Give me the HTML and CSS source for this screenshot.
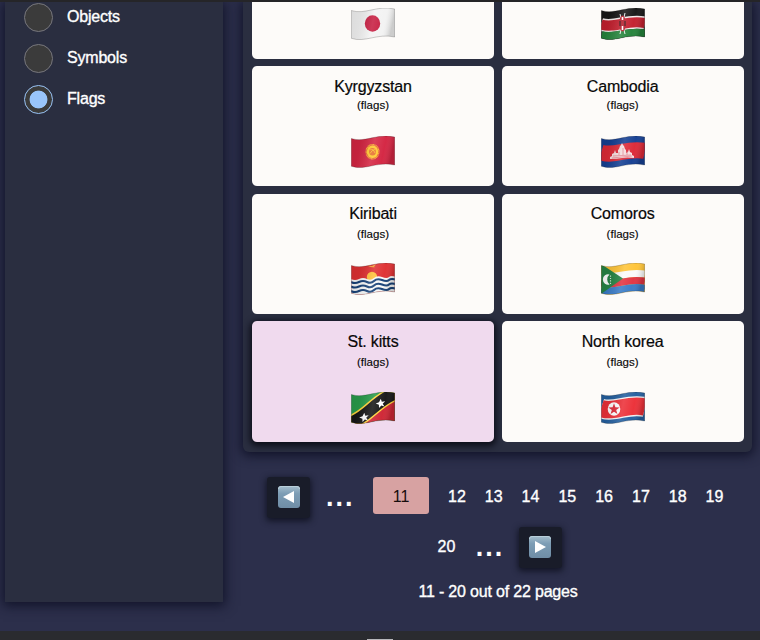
FILE: index.html
```
<!DOCTYPE html>
<html lang="en">
<head>
<meta charset="utf-8">
<title>Emoji search</title>
<link rel="stylesheet" href="styles.css">
</head>
<body>
<svg class="defs" aria-hidden="true">
  <defs>
    <clipPath id="cloth"><path d="M.3 2.5C14 7 26-3 43.7 1V29C26 25 14 35 .3 30.3Z"/></clipPath>
    <path id="wave" d="M0 2.5C14 7 26-3 44 1"/>
    <linearGradient id="fold" x1="0" x2="1" y1="0" y2=".15">
      <stop offset="0" stop-color="#000" stop-opacity=".1"/>
      <stop offset=".22" stop-color="#000" stop-opacity=".08"/>
      <stop offset=".55" stop-color="#fff" stop-opacity=".12"/>
      <stop offset=".8" stop-color="#fff" stop-opacity=".02"/>
      <stop offset="1" stop-color="#000" stop-opacity=".16"/>
    </linearGradient>
    <linearGradient id="key" x1="0" x2="0" y1="0" y2="1">
      <stop offset="0" stop-color="#a4bdcc"/><stop offset=".35" stop-color="#7d9db5"/><stop offset="1" stop-color="#6f8da6"/>
    </linearGradient>
    <g id="shade">
      <path d="M.3 2.5C14 7 26-3 43.7 1V29C26 25 14 35 .3 30.3Z" fill="url(#fold)" stroke="#000" stroke-opacity=".22" stroke-width=".9"/>
    </g>
  </defs>
</svg>
<div class="page">
  <aside class="sidebar">
    <label class="option"><span class="radio"></span><span class="name">Objects</span></label>
    <label class="option"><span class="radio"></span><span class="name">Symbols</span></label>
    <label class="option"><span class="radio checked"></span><span class="name">Flags</span></label>
  </aside>
  <main class="content">
    <section class="panel">
      <article class="card first">
        <svg class="flag" viewBox="0 0 44 33"><g clip-path="url(#cloth)"><path fill="#f3f3f3" d="M0 0h44v33H0z"/><ellipse cx="21.5" cy="15.5" rx="7.7" ry="8.2" fill="#c71f42"/></g><use href="#shade"/></svg>
      </article>
      <article class="card first">
        <svg class="flag" viewBox="0 0 44 33"><g clip-path="url(#cloth)"><path fill="#171717" d="M0 0h44v33H0z"/><g fill="none"><use href="#wave" y="14" stroke="#f5eeee" stroke-width="13"/><use href="#wave" y="14" stroke="#c3202f" stroke-width="10"/><use href="#wave" y="25.500" stroke="#25843c" stroke-width="10"/></g><path d="M19 6l5 20M24 5l-5 21" stroke="#eee" stroke-width="1"/><ellipse cx="21.5" cy="15.5" rx="3.3" ry="8" fill="#b51f2d"/><path d="M21.5 9v3m0 6v4" stroke="#fff" stroke-width="1.6"/><path d="M19 13v5m5-5v5" stroke="#241818"/></g><use href="#shade"/></svg>
      </article>
      <article class="card">
        <h2>Kyrgyzstan</h2><p>(flags)</p>
        <svg class="flag" viewBox="0 0 44 33"><g clip-path="url(#cloth)"><path fill="#d42542" d="M0 0h44v33H0z"/><ellipse cx="21.5" cy="15.7" rx="6.4" ry="7.2" fill="none" stroke="#f9b72d" stroke-width="1.2" stroke-dasharray="1 .4"/><ellipse cx="21.5" cy="15.7" rx="5.8" ry="6.4" fill="#ffc92e"/><ellipse cx="21.5" cy="15.7" rx="3.4" ry="3.8" fill="#e7702d"/><path d="M19 14q3-2 5 3m-5 .5q2-4 5-4" fill="none" stroke="#ffc933" stroke-width=".8"/></g><use href="#shade"/></svg>
      </article>
      <article class="card">
        <h2>Cambodia</h2><p>(flags)</p>
        <svg class="flag" viewBox="0 0 44 33"><g clip-path="url(#cloth)"><path fill="#153f93" d="M0 0h44v33H0z"/><use href="#wave" y="14" fill="none" stroke="#dd2937" stroke-width="16"/><path d="M9 23v-2l2-1v-2l2-1 1-3 1 3h2v-3l1-1 1-3 1-1 1-2 1 2 1 1 1 3 1 1v3l2-1 1-3 1 3 2 1v2l2 1v2q-7-1-12 0t-12 1z" fill="#f5dedf"/><path d="M12 20l18-1M11 22l20-2M18 16v3m4-7v7m4-4v4" stroke="#dc7380" stroke-width=".7"/></g><use href="#shade"/></svg>
      </article>
      <article class="card raised">
        <h2>Kiribati</h2><p>(flags)</p>
        <svg class="flag" viewBox="0 0 44 33"><g clip-path="url(#cloth)"><path fill="#df3032" d="M0 0h44v33H0z"/><circle cx="21" cy="14" r="5.2" fill="#ffc13b"/><path d="M16 2.500q4 0 5 .500l4-2-2 3 1 .500q-5 0-8-2z" fill="#f3a338"/><path d="M0 16q4 2 8 0t8 0 7-1 8-1 7 0 8 0v19H0z" fill="#f7f7f7"/><path d="M0 19q4 2 8 0t8 0 7-1 8-1 7 0 8 0M0 23.5q4 2 8 0t8 0 7-1 8-1 7 0 8 0M0 28q4 2 8 0t8 0 7-1 8-1 7 0 8 0" fill="none" stroke="#184178" stroke-width="2.1"/></g><use href="#shade"/></svg>
      </article>
      <article class="card raised">
        <h2>Comoros</h2><p>(flags)</p>
        <svg class="flag" viewBox="0 0 44 33"><g clip-path="url(#cloth)"><path fill="#ffc438" d="M0 0h44v33H0z"/><g fill="none" stroke-width="7.2"><use href="#wave" y="10.3" stroke="#fafafa"/><use href="#wave" y="17.3" stroke="#e13442"/><use href="#wave" y="24.5" stroke="#397bc7"/></g><path d="M0 1l22 14.5L0 31z" fill="#268445"/><path d="M8.500 11.5a5.2 5.2 0 1 0 0 10 6.600 6.600 0 0 1 0-10z" fill="#fff"/><path d="M9.5 12.5v8.5" stroke="#d5eadb" stroke-width="1.2" stroke-dasharray="1.2 1.2"/></g><use href="#shade"/></svg>
      </article>
      <article class="card active">
        <h2>St. kitts</h2><p>(flags)</p>
        <svg class="flag" viewBox="0 0 44 33"><g clip-path="url(#cloth)"><path fill="#299c4b" d="M0 0h44v33H0z"/><path fill="#cf2635" d="M44 0v33H0z"/><path d="M-1 31C17 25 25 8 45 1" fill="none" stroke="#ffd43c" stroke-width="15"/><path d="M-1 31C17 25 25 8 45 1" fill="none" stroke="#171717" stroke-width="12"/><path id="star" d="M29.8 6.7l1 3 3.4-.5-2.5 2.5 1.8 2.9-3.2-1.1-2.3 2.5-.1-3.3-3.2-1.2 3.3-1.2z" fill="#fff"/><use href="#star" x="-16.5" y="14"/></g><use href="#shade"/></svg>
      </article>
      <article class="card last">
        <h2>North korea</h2><p>(flags)</p>
        <svg class="flag" viewBox="0 0 44 33"><g clip-path="url(#cloth)"><path fill="#245f9f" d="M0 0h44v33H0z"/><g fill="none"><use href="#wave" y="14" stroke="#f4f4f5" stroke-width="20"/><use href="#wave" y="14" stroke="#ec3038" stroke-width="17.3"/></g><ellipse cx="13" cy="17" rx="6.3" ry="6.7" fill="#fff"/><path d="M13 11.300l1.4 4 4.2.1-3.4 2.6 1.2 4.1-3.4-2.4-3.4 2.4 1.2-4.1-3.4-2.6 4.2-.1z" fill="#e02d3b"/></g><use href="#shade"/></svg>
      </article>
    </section>
    <nav class="pager">
      <div class="row">
        <button class="step"><svg viewBox="0 0 22 22"><rect width="22" height="22" rx="3" fill="url(#key)"/><path d="M.5 3Q.5.5 3 .5h16q2.500 0 2.500 2.500" fill="none" stroke="#b9cfda"/><path d="M16 5v12L5 11z" fill="#fff"/></svg></button>
        <span class="dots">...</span>
        <a class="num current">11</a><a class="num">12</a><a class="num">13</a><a class="num">14</a><a class="num">15</a><a class="num">16</a><a class="num">17</a><a class="num">18</a><a class="num">19</a>
      </div>
      <div class="row second">
        <a class="num">20</a>
        <span class="dots">...</span>
        <button class="step"><svg viewBox="0 0 22 22"><rect width="22" height="22" rx="3" fill="url(#key)"/><path d="M.5 3Q.5.5 3 .5h16q2.500 0 2.500 2.500" fill="none" stroke="#b9cfda"/><path d="M6 5v12l11-6z" fill="#fff"/></svg></button>
      </div>
      <p class="summary">11 - 20 out of 22 pages</p>
    </nav>
  </main>
</div>
<footer class="bar"><span class="handle"></span></footer>
</body>
</html>
```
FILE: styles.css
```
* { box-sizing: border-box; }
body {
  margin: 0;
  height: 640px;
  overflow: hidden;
  display: flex;
  flex-direction: column;
  background: #2c2f4b;
  border-top: 2px solid #252528;
  font: 16px/20px "Liberation Sans", Arial, sans-serif;
  color: #fff;
}
.defs { position: absolute; width: 0; height: 0; }
.page { flex: 1; min-height: 0; display: flex; gap: 20px; padding-left: 5px; overflow: hidden; }
.sidebar {
  width: 218px;
  height: 600px;
  padding: 1px 0 0 19px;
  display: flex;
  flex-direction: column;
  gap: 12px;
  background: #2a2e40;
  box-shadow: 0 2px 11px 2px #12142a;
}
.option {
  display: flex;
  align-items: center;
  gap: 14px;
  height: 29px;
  letter-spacing: -.2px;
  -webkit-text-stroke: .35px #fff;
}
.name { padding-bottom: 2px; }
.radio {
  width: 29px;
  height: 29px;
  border: 1px solid #77777d;
  border-radius: 50%;
  background: #3b3b3b;
}
.checked { border-color: #99c3f5; background: radial-gradient(circle, #99c5fa 8.500px, #3b3b3b 9.300px); }
.content { width: 509px; }
.panel {
  height: 450px;
  padding: 0 9px;
  display: grid;
  grid-template-columns: 242px 242px;
  grid-template-rows: 56.500px 120px 120px 121px;
  gap: 7.600px;
  background: #2a2e40;
  border-radius: 0 0 6px 6px;
  box-shadow: 0 2px 11px 2px #12142a;
}
.card {
  display: flex;
  flex-direction: column;
  align-items: center;
  padding-top: 11px;
  border-radius: 5px;
  background: #fdfbf9;
  color: #080808;
}
.first { padding-top: 6px; border-radius: 0 0 5px 5px; }
.raised { padding-top: 10px; }
.active { background: #f0daee; box-shadow: 0 2px 6px 2px #0c0d18; }
.card h2 { margin: 0; font-size: 16px; line-height: 20px; font-weight: 400; letter-spacing: -.16px; -webkit-text-stroke: .2px #080808; }
.card p { margin: 0 0 23px; font-size: 11.500px; line-height: 16px; -webkit-text-stroke: .15px #080808; }
.raised p { margin: 2px 0 21px; }
.active p, .last p { margin: 2px 0 22px; }
.flag { width: 44px; height: 33px; flex: none; }
.pager { padding-top: 25px; }
.row { display: flex; height: 50px; padding-left: 24px; -webkit-text-stroke: .35px currentColor; }
.second { padding-left: 185px; }
.step {
  width: 43px;
  height: 41px;
  padding: 0;
  border: 0;
  border-radius: 3px;
  background: #191c29;
  box-shadow: 0 2px 6px 1px #121424;
  display: flex;
  justify-content: center;
  padding-top: 9px;
}
.step svg { width: 22px; height: 22px; }
.dots {
  width: 63px;
  padding-left: 16px;
  font-size: 27px;
  line-height: 40px;
  font-weight: 700;
  letter-spacing: 2px;
  -webkit-text-stroke: 0;
}
.num { width: 36.800px; line-height: 39px; text-align: center; }
.current {
  width: 56px;
  height: 37px;
  margin-right: 9.500px;
  border-radius: 3px;
  background: #d7a2a2;
  color: #160c0c;
  -webkit-text-stroke: 0;
}
.second .dots { width: 54px; padding-left: 11px; margin-right: 0; }
.summary { margin: 5px 0 0; padding-left: 1px; text-align: center; line-height: 20px; letter-spacing: -.18px; -webkit-text-stroke: .35px #fff; }
.bar { height: 9px; flex: none; display: flex; align-items: flex-end; padding-left: 367px; background: #2a2b2f; }
.handle { width: 26px; height: 1px; background: #b8b8bb; }
```
